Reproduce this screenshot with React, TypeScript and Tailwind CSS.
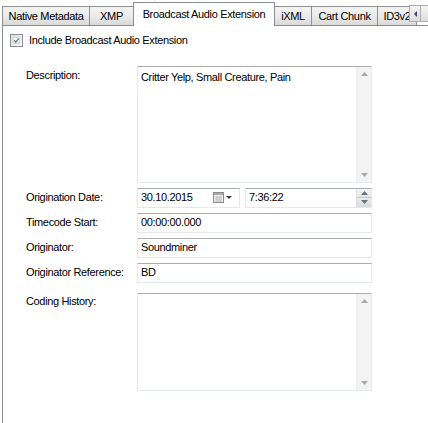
import React from 'react'

const tabs = [
  { t: 'Native Metadata', w: 'w-[88px]' },
  { t: 'XMP', w: 'w-[45px]' },
  { t: 'Broadcast Audio Extension', w: 'w-[142px]' },
  { t: 'iXML', w: 'w-[38px]' },
  { t: 'Cart Chunk', w: 'w-[67px]' },
  { t: 'ID3v2', w: 'w-[40px]' },
]

function Scrollbar() {
  return (
    <div className="w-[15px] self-stretch bg-[#f3f3f3] border-l border-[#ececec] flex flex-col justify-between items-center py-[5px]">
      <svg width="7" height="4" viewBox="0 0 7 4"><path d="M0 4L3.5 0L7 4Z" fill="#a9a9a9" /></svg>
      <svg width="7" height="4" viewBox="0 0 7 4"><path d="M0 0L3.5 4L7 0Z" fill="#a9a9a9" /></svg>
    </div>
  )
}

function TextBox({ value }: { value: string }) {
  return (
    <div className="h-[20px] border border-[#e3e9ef] border-t-[#abadb3] bg-white flex items-center px-[3px] text-black">
      {value}
    </div>
  )
}

function Label({ children }: { children: React.ReactNode }) {
  return <div className="h-[20px] flex items-center text-black">{children}</div>
}

export default function App() {
  return (
    <div className="w-[428px] h-[423px] bg-white overflow-hidden flex flex-col text-[11px] tracking-[-0.35px] font-['Liberation_Sans',Arial,sans-serif]">
      {/* tab strip */}
      <div className="h-[25px] flex items-end pl-[2px] relative z-10">
        {tabs.map((tab, i) =>
          i === 2 ? (
            <div
              key={tab.t}
              className={`${tab.w} shrink-0 h-[24px] -mb-px flex items-center justify-center bg-white border border-b-0 border-[#898c95] text-black -ml-[1px] relative z-10`}
            >
              {tab.t}
            </div>
          ) : (
            <div
              key={tab.t}
              className={`${tab.w} shrink-0 h-[19px] flex items-center justify-center bg-gradient-to-b from-[#f3f3f3] via-[#ebebeb] to-[#d9d9d9] border border-[#8e8f8f] border-b-0 -ml-px first:ml-0 text-black`}
            >
              {tab.t}
            </div>
          ),
        )}
        <div className="absolute left-[409px] bottom-[3px] flex bg-white z-20">
          <div className="w-[12px] h-[17px] border border-[#acacac] bg-gradient-to-b from-[#f5f5f5] to-[#dcdcdc] flex items-center justify-center">
            <svg width="3" height="6" viewBox="0 0 3 6"><path d="M3 0L0 3L3 6Z" fill="#3a3a6a" /></svg>
          </div>
          <div className="w-[12px] h-[17px] border border-l-0 border-[#acacac] bg-gradient-to-b from-[#f5f5f5] to-[#dcdcdc]" />
        </div>
      </div>

      {/* tab page */}
      <div className="flex-1 ml-[2px] border-l border-t border-[#898c95] bg-white">
        <div className="flex items-center gap-[6px] pl-[7px] pt-[6px]">
          <div className="w-[13px] h-[13px] border border-[#8f8f8f] bg-gradient-to-br from-[#dcdcdc] to-[#fbfbfb] p-[2px]">
            <div className="w-full h-full bg-white border border-[#cfd3da] flex items-center justify-center">
              <svg width="7" height="7" viewBox="0 0 7 7">
                <path d="M0.5 3.5L2.5 5.7L6.5 0.8" stroke="#4a5f97" strokeWidth="1.7" fill="none" />
              </svg>
            </div>
          </div>
          <span className="text-black">Include Broadcast Audio Extension</span>
        </div>

        <div className="grid grid-cols-[111px_235px] ml-[23px] mt-[17px] gap-y-[5px]">
          <div className="pt-[1px] text-black">Description:</div>
          <div className="h-[117px] border border-[#e3e9ef] border-t-[#abadb3] bg-white flex">
            <div className="flex-1 px-[3px] pt-[2px] text-black">Critter Yelp, Small Creature, Pain</div>
            <Scrollbar />
          </div>

          <Label>Origination Date:</Label>
          <div className="flex gap-[5px]">
            <div className="w-[103px] h-[20px] border border-[#e3e9ef] border-t-[#abadb3] flex items-center pl-[3px] pr-[7px] text-black">
              <span className="flex-1">30.10.2015</span>
              <svg width="11" height="11" viewBox="0 0 11 11">
                <rect x="0.5" y="0.5" width="10" height="10" fill="#eeeeee" stroke="#8a8a8a" />
                <rect x="1" y="1" width="9" height="2" fill="#a9a9a9" />
                <path d="M2 5h7M2 7h7M2 9h7M4 4v6M7 4v6" stroke="#b8b8b8" strokeWidth="0.8" />
              </svg>
              <svg width="6" height="3" viewBox="0 0 6 3" className="ml-[2px]"><path d="M0 0L3 3L6 0Z" fill="#3b3b3b" /></svg>
            </div>
            <div className="flex-1 h-[20px] border border-[#e3e9ef] border-t-[#abadb3] flex items-center pl-[3px] text-black">
              <span className="flex-1">7:36:22</span>
              <div className="w-[15px] h-[18px] flex flex-col border-l border-[#e0e0e0]">
                <div className="flex-1 bg-gradient-to-b from-[#f4f4f4] to-[#e6e6e6] border-b border-[#c6c6c6] flex items-center justify-center">
                  <svg width="7" height="4" viewBox="0 0 7 4"><path d="M0 4L3.5 0L7 4Z" fill="#6b6f88" /></svg>
                </div>
                <div className="flex-1 bg-gradient-to-b from-[#ebebeb] to-[#dcdcdc] flex items-center justify-center">
                  <svg width="7" height="4" viewBox="0 0 7 4"><path d="M0 0L3.5 4L7 0Z" fill="#6b6f88" /></svg>
                </div>
              </div>
            </div>
          </div>

          <Label>Timecode Start:</Label>
          <TextBox value="00:00:00.000" />

          <Label>Originator:</Label>
          <TextBox value="Soundminer" />

          <Label>Originator Reference:</Label>
          <TextBox value="BD" />

          <div className="mt-[5px] text-black">Coding History:</div>
          <div className="h-[98px] mt-[5px] border border-[#e3e9ef] border-t-[#abadb3] bg-white flex">
            <div className="flex-1" />
            <Scrollbar />
          </div>
        </div>
      </div>
    </div>
  )
}
